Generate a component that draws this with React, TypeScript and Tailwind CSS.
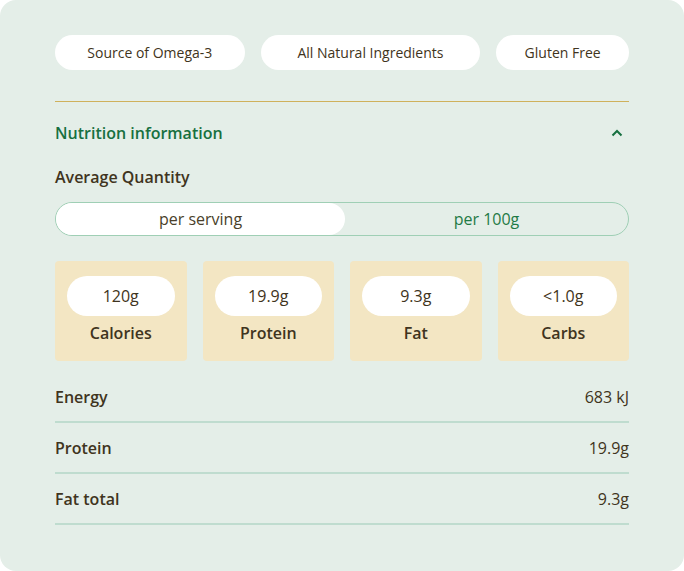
import React from "react";

const tags = [
  { text: "Source of Omega-3", width: "w-[190px]" },
  { text: "All Natural Ingredients", width: "w-[220px]" },
  { text: "Gluten Free", width: "w-[133px]" },
];

const highlights = [
  { value: "120g", label: "Calories" },
  { value: "19.9g", label: "Protein" },
  { value: "9.3g", label: "Fat" },
  { value: "<1.0g", label: "Carbs" },
];

const rows = [
  { name: "Energy", amount: "683 kJ" },
  { name: "Protein", amount: "19.9g" },
  { name: "Fat total", amount: "9.3g" },
];

const App = () => {
  return (
    <div className="w-[684px] h-[571px] bg-white" style={{ fontFamily: '"Open Sans", sans-serif' }}>
      <div className="w-full h-full bg-[#e4eee8] rounded-2xl px-[55px] pt-[35px] text-[#3f3420]">
        {/* Tags */}
        <div className="flex gap-4">
          {tags.map(({ text, width }) => (
            <div
              key={text}
              className={`${width} h-[35px] flex items-center justify-center bg-white rounded-full text-sm font-medium text-[#3f3420]`}
            >
              {text}
            </div>
          ))}
        </div>

        <div className="mt-[31px] h-px bg-[#cfb15c]" />

        {/* Accordion header */}
        <div className="h-[62px] flex items-center justify-between">
          <span className="text-base font-semibold text-[#177040]">Nutrition information</span>
          <svg width="12" height="8" viewBox="0 0 12 8" className="mr-[6px]">
            <path d="M1.5 6.5 L6 2 L10.5 6.5" fill="none" stroke="#177040" strokeWidth="2" />
          </svg>
        </div>

        <div className="mt-px text-base leading-6 font-semibold text-[#3f3420]">Average Quantity</div>

        {/* Toggle */}
        <div className="mt-[13px] h-[34px] flex border border-[#9fcfb5] rounded-full">
          <button className="w-[289px] bg-white rounded-full text-base text-[#4a3f2a]">per serving</button>
          <button className="flex-1 text-base text-[#1f7a45]">per 100g</button>
        </div>

        {/* Highlight cards */}
        <div className="mt-[25px] grid grid-cols-4 gap-4">
          {highlights.map(({ value, label }) => (
            <div key={label} className="h-[100px] bg-[#f3e6c3] rounded px-3 pt-[15px] flex flex-col items-center">
              <div className="w-full h-[40px] bg-white rounded-full flex items-center justify-center text-base">
                {value}
              </div>
              <div className="mt-[5px] leading-6 text-base font-semibold">{label}</div>
            </div>
          ))}
        </div>

        {/* Table */}
        <div className="mt-[11px]">
          {rows.map(({ name, amount }) => (
            <div
              key={name}
              className="flex justify-between pt-[13px] pb-3 border-b-2 border-[#bfdccf] leading-6 text-base"
            >
              <span className="font-semibold">{name}</span>
              <span>{amount}</span>
            </div>
          ))}
        </div>
      </div>
    </div>
  );
};

export default App;
